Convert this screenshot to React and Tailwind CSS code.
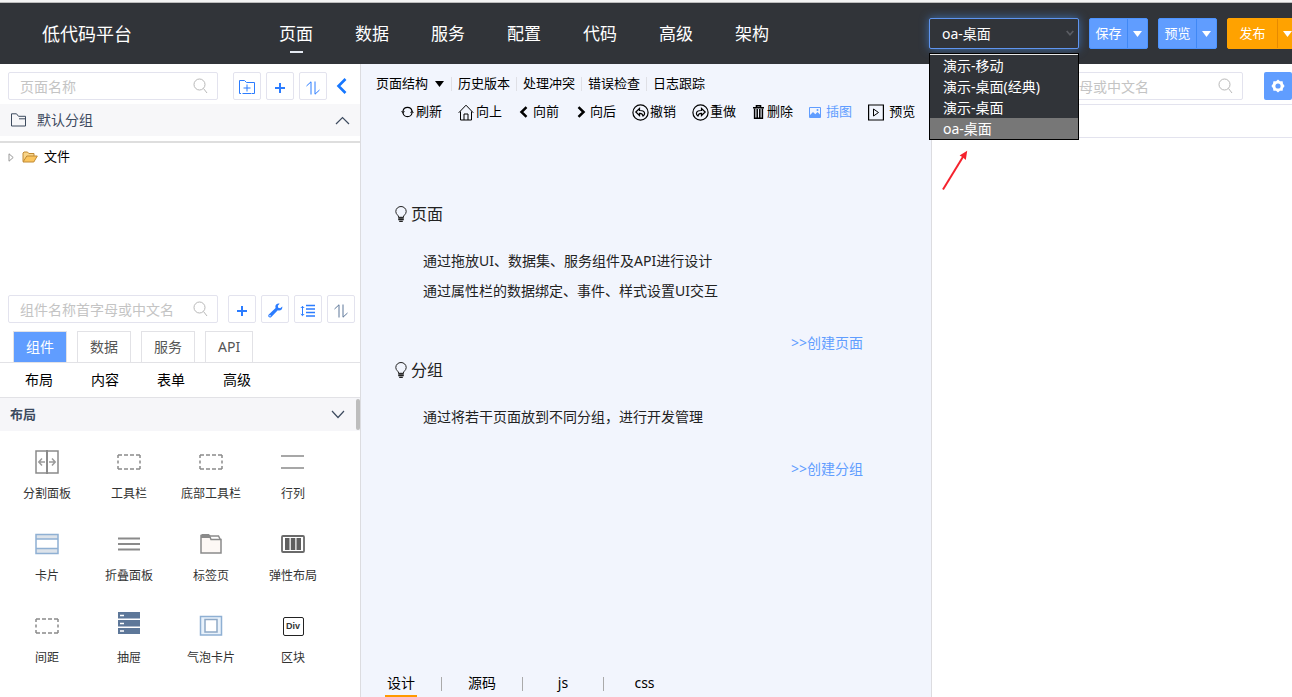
import React from "react";

const NAV = ["页面", "数据", "服务", "配置", "代码", "高级", "架构"];
const OPTIONS = ["演示-移动", "演示-桌面(经典)", "演示-桌面", "oa-桌面"];

function Svg({ w, h, children, className = "" }) {
  return (
    <svg
      width={w}
      height={h}
      viewBox={`0 0 ${w} ${h}`}
      fill="none"
      stroke="currentColor"
      aria-hidden="true"
      className={`shrink-0 ${className}`}
    >
      {children}
    </svg>
  );
}

const Caret = () => (
  <Svg w={9} h={6}>
    <path d="M0 0h9L4.5 6z" fill="currentColor" stroke="none" />
  </Svg>
);

const SearchIcon = () => (
  <Svg w={15} h={16} className="text-[#b8b8b8]">
    <circle cx="6.5" cy="6.5" r="5.5" />
    <path d="M10.5 10.5l3.5 4.5" />
  </Svg>
);

const PlusIcon = () => (
  <Svg w={12} h={12} className="mt-1">
    <path d="M6 1v10M1 6h10" strokeWidth="2" />
  </Svg>
);

const SortIcon = () => (
  <Svg w={14} h={14} className="mt-1">
    <path d="M.5 5L5 .8V13.5M9 .5v12.7L13.5 9" />
  </Svg>
);

const AddFolderIcon = () => (
  <Svg w={18} h={16} className="mt-0.5">
    <path d="M3 14.500H1.500v-13h5l2 2h8v11H14M4.500 14.500h9M9 5.500v7M5.500 9h7" />
  </Svg>
);

const WrenchIcon = () => (
  <Svg w={15} h={15} className="mt-0.5">
    <path
      d="M14.300 3.400L12.200 5.200 10.200 4.700 9.800 2.800 11.600.7C9.600.1 7.800 1.200 7.400 3c-.1.700 0 1.300.2 1.900L.8 11.500c-.7.700-.7 1.800 0 2.500s1.800.6 2.500-.1L9.800 7.300c2.700.9 5-1.200 4.500-3.900z"
      fill="currentColor"
      stroke="none"
    />
    <circle cx="2" cy="12.800" r=".7" fill="#fff" stroke="none" />
  </Svg>
);

const LineHeightIcon = () => (
  <Svg w={16} h={14} className="mt-1">
    <path d="M2.500 2.500v9M.8 4l1.700-1.700L4.200 4M.8 10l1.700 1.700L4.200 10" />
    <path d="M6 1.500h9M6 5h9M6 8.500h9M6 12h9" strokeWidth="1.300" />
  </Svg>
);

function IconButton({ label, children }) {
  return (
    <button
      type="button"
      aria-label={label}
      className="flex size-7 shrink-0 items-center justify-center rounded-xs border border-[#e3e3ee] bg-white text-[#2b7cff]"
    >
      {children}
    </button>
  );
}

function SearchBox({ label, className = "" }) {
  return (
    <label
      className={`flex h-7 shrink-0 items-center rounded-xs border border-[#e3e3ee] bg-white pr-[9px] pl-[11px] ${className}`}
    >
      <input
        type="text"
        aria-label={label}
        placeholder={label}
        className="h-full w-0 min-w-0 flex-1 bg-transparent text-sm outline-none placeholder:text-[#c4c4c4]"
      />
      <SearchIcon />
    </label>
  );
}

function SplitButton({ label, color, divider, width }) {
  return (
    <div className={`flex h-[31px] shrink-0 overflow-hidden rounded-xs border text-[13px] text-white ${color}`}>
      <button type="button" className={`${width} text-center`}>
        {label}
      </button>
      <button
        type="button"
        aria-label={`${label}选项`}
        className={`flex w-5 items-center justify-center border-l ${divider}`}
      >
        <Caret />
      </button>
    </div>
  );
}

function Header() {
  return (
    <header className="flex h-[61px] items-center bg-[#313439] text-white">
      <h1 className="w-[258px] shrink-0 pl-[42px] text-lg">低代码平台</h1>
      <nav className="flex h-full shrink-0">
        {NAV.map((item, i) => (
          <a
            key={item}
            href="#"
            className="relative flex w-[76px] items-center justify-center text-[17px]"
          >
            {item}
            {i === 0 && <span className="absolute bottom-[11px] h-0.5 w-[13px] bg-[#e4e9f2]" />}
          </a>
        ))}
      </nav>
      <div className="ml-auto flex w-[363px] shrink-0 gap-2.5">
        <div className="relative w-[150px] shrink-0">
          <select
            aria-label="应用"
            defaultValue="oa-桌面"
            className="block h-[31px] w-full appearance-none rounded-xs border border-[#5f95f0] bg-[#313439] pl-3 text-sm text-white shadow-[0_0_10px_#3f6fae] outline-none"
          >
            {OPTIONS.map((o) => (
              <option key={o}>{o}</option>
            ))}
          </select>
          <Svg w={8} h={6} className="pointer-events-none absolute top-3 right-[5px] text-[#5a5d63]">
            <path d="M.7 1L4 4.700 7.300 1" strokeWidth="1.700" />
          </Svg>
          <ul
            role="listbox"
            aria-label="应用列表"
            className="absolute top-[35px] left-0 z-20 w-full border border-black bg-[#313439] text-sm leading-[21px]"
          >
            <li role="presentation" className="h-px bg-[#e8e8e8]" />
            {OPTIONS.map((o) => (
              <li
                key={o}
                role="option"
                aria-selected={o === "oa-桌面"}
                className="pl-[13px] aria-selected:bg-[#777777]"
              >
                {o}
              </li>
            ))}
          </ul>
          <Svg w={28} h={42} className="pointer-events-none absolute top-[132px] left-3 z-20 text-[#f5222d]">
            <path d="M2 39.500L22.500 6" strokeWidth="2" />
            <path d="M26.200.8L18.600 5.500l3.200 1.800 3 2.800z" fill="currentColor" stroke="none" />
          </Svg>
        </div>
        <SplitButton label="保存" color="border-[#4b93ff] bg-[#609dff]" divider="border-[#4088f5]" width="w-[37px]" />
        <SplitButton label="预览" color="border-[#4b93ff] bg-[#609dff]" divider="border-[#4088f5]" width="w-[37px]" />
        <SplitButton label="发布" color="border-[#ffa200] bg-[#ffa200]" divider="border-[#e68a00]" width="w-[49px]" />
      </div>
    </header>
  );
}

const GRAY = "#8a8a8a";

const DashedIcon = () => (
  <Svg w={24} h={16}>
    <path d="M1 1h22M1 15h22" stroke={GRAY} strokeWidth="1.500" strokeDasharray="4 2" />
    <path d="M1 1v14M23 1v14" stroke={GRAY} strokeWidth="1.500" strokeDasharray="3 2.500" />
  </Svg>
);

const COMPONENTS = [
  [
    "分割面板",
    <Svg w={24} h={24}>
      <path d="M1 1h22v22H1z" stroke={GRAY} strokeWidth="1.500" />
      <path d="M12 0v24" stroke={GRAY} strokeWidth="2" />
      <path d="M4 12h6M7 8.500L3.800 12 7 15.500M14 12h6M17 8.500l3.200 3.500-3.200 3.500" stroke="#9a9a9a" strokeWidth="1.500" />
    </Svg>,
  ],
  ["工具栏", <DashedIcon />],
  ["底部工具栏", <DashedIcon />],
  [
    "行列",
    <Svg w={24} h={16}>
      <path d="M0 2h23M0 14h23" stroke={GRAY} strokeWidth="1.500" />
    </Svg>,
  ],
  [
    "卡片",
    <Svg w={24} h={22}>
      <path d="M1 2h22v18H1z" fill="#fff" stroke="none" />
      <path d="M1 2h22v4H1zM1 16h22v4H1z" fill="#dde3ea" stroke="none" />
      <path d="M1 1.500h22v19H1zM1 6h22M1 15.500h22" stroke="#8fb0d3" strokeWidth="1.500" />
    </Svg>,
  ],
  [
    "折叠面板",
    <Svg w={22} h={16}>
      <path d="M0 2.500h22M0 8h22M0 13.500h22" stroke={GRAY} strokeWidth="2" />
    </Svg>,
  ],
  [
    "标签页",
    <Svg w={22} h={20}>
      <path d="M1 1.500h8.500l1.500 4h10V19H1z" fill="#fdf8f5" stroke={GRAY} strokeWidth="1.500" />
      <path d="M2 0h7l1.500 4H1V1z" fill={GRAY} stroke="none" />
      <path d="M9.500 2h9l1.800 3.500" stroke={GRAY} strokeWidth="1.500" />
    </Svg>,
  ],
  [
    "弹性布局",
    <Svg w={24} h={18}>
      <rect x="1" y="1" width="22" height="16" rx="1" stroke="#6a6a6a" strokeWidth="1.800" />
      <path d="M4 3h4.500v12H4zM9.800 3h4.500v12H9.800zM15.500 3H20v12h-4.500z" fill="#5f5f5f" stroke="none" />
    </Svg>,
  ],
  ["间距", <DashedIcon />],
  [
    "抽屉",
    <Svg w={22} h={22} className="mb-1.5">
      <path d="M0 0h22v6.500H0zM0 8h22v6.500H0zM0 16h22v6H0z" fill="#5d7799" stroke="none" />
      <path d="M2 3.500h4M2 11.500h4M2 19h4" stroke="#fff" strokeWidth="1.400" />
    </Svg>,
  ],
  [
    "气泡卡片",
    <Svg w={24} h={22}>
      <path d="M1.500 1.500h21v18.500h-21z" fill="#e9f2fb" stroke="#8fb0d3" strokeWidth="1.500" />
      <path d="M6 4.500h12v12.500H6z" fill="#fff" stroke="#8fa9c6" strokeWidth="1.500" />
    </Svg>,
  ],
  [
    "区块",
    <span className="flex h-[19px] w-[21px] items-center justify-center rounded-xs border border-[#222] font-['Liberation_Sans',sans-serif] text-[9px] leading-none font-bold text-[#333]">
      Div
    </span>,
  ],
];

function LeftPanel() {
  return (
    <aside className="relative flex w-[361px] shrink-0 flex-col border-r border-[#dcdce0] bg-white">
      <div className="flex items-center pt-2 pb-1 pl-2">
        <SearchBox label="页面名称" className="w-[210px]" />
        <div className="ml-[15px] flex gap-[5px]">
          <IconButton label="新建分组">
            <AddFolderIcon />
          </IconButton>
          <IconButton label="新建页面">
            <PlusIcon />
          </IconButton>
          <IconButton label="排序">
            <SortIcon />
          </IconButton>
        </div>
        <button type="button" aria-label="收起" className="ml-[9px] text-[#1677ff]">
          <Svg w={11} h={16}>
            <path d="M9.500 1L2.500 8l7 7" strokeWidth="2.600" />
          </Svg>
        </button>
      </div>

      <button
        type="button"
        className="flex h-8 items-center bg-[#f7f7f9] pr-2.5 pl-2.5 text-sm text-[#3d4b5f]"
      >
        <Svg w={17} h={14}>
          <path d="M1.500 13V.8h5l2 2.500H15.500V13zM9 5.800h6.500" />
        </Svg>
        <span className="ml-2.5">默认分组</span>
        <Svg w={15} h={9} className="ml-auto">
          <path d="M1 8l6.500-6.500L14 8" strokeWidth="1.200" />
        </Svg>
      </button>

      <div className="mt-[5px] h-[154px] border-t-2 border-[#dedede]">
        <div className="flex h-7 items-center pl-2 text-[13px] text-black">
          <Svg w={6} h={9} className="text-[#999]">
            <path d="M1 .8v7.400l4.200-3.700z" />
          </Svg>
          <Svg w={16} h={12} className="ml-2">
            <path d="M1 10.500V2l1-1h3.500l1.300 1.500H12v2.500" fill="#f8d58a" stroke="#c08a35" />
            <path d="M1 11l3.800-6h10.500L11.800 11z" fill="#fbc55e" stroke="#c08a35" />
          </Svg>
          <span className="ml-1.5">文件</span>
        </div>
      </div>

      <div className="flex items-center pl-2">
        <SearchBox label="组件名称首字母或中文名" className="w-[210px]" />
        <div className="ml-2.5 flex gap-[5px]">
          <IconButton label="新建组件">
            <PlusIcon />
          </IconButton>
          <IconButton label="设置组件">
            <WrenchIcon />
          </IconButton>
          <IconButton label="行高">
            <LineHeightIcon />
          </IconButton>
          <IconButton label="组件排序">
            <span className="text-[#5d7799]">
              <SortIcon />
            </span>
          </IconButton>
        </div>
      </div>

      <div role="tablist" className="mt-2 flex h-8 gap-2.5 border-b border-[#e2e2e6] pl-[13px] text-sm text-[#555]">
        {["组件", "数据", "服务", "API"].map((t, i) => (
          <button
            key={t}
            type="button"
            role="tab"
            aria-selected={i === 0}
            className="h-8 border border-[#e2e2e6] px-3 aria-selected:bg-[#609dff] aria-selected:text-white"
          >
            {t}
          </button>
        ))}
      </div>

      <div className="flex h-[35px] border-b border-[#e2e2e6] pl-1.5 text-sm text-black">
        {["布局", "内容", "表单", "高级"].map((t) => (
          <button key={t} type="button" className="w-[66px]">
            {t}
          </button>
        ))}
      </div>

      <div className="relative">
        <button
          type="button"
          className="flex h-[33px] w-full items-center bg-[#f6f6f9] pr-[15px] pl-2.5 text-[13px] font-bold text-[#3d4b5f]"
        >
          布局
          <Svg w={14} h={9} className="ml-auto">
            <path d="M1 1l6 6.500L13 1" strokeWidth="1.200" />
          </Svg>
        </button>
        <span className="absolute top-px right-0 h-[31px] w-1 rounded-full bg-[#bdbdbd]" />
      </div>

      <div className="grid grid-cols-[repeat(4,82px)] pl-1.5">
        {COMPONENTS.map(([name, icon]) => (
          <button
            key={name}
            type="button"
            className="flex h-[82px] flex-col items-center pt-[15px] text-xs text-[#333]"
          >
            <span className="flex h-8 items-center">{icon}</span>
            <span className="mt-[7px] leading-[18px]">{name}</span>
          </button>
        ))}
      </div>
    </aside>
  );
}

const TOOLS = [
  [
    "刷新",
    "w-[15px]",
    <Svg w={13} h={12}>
      <path d="M2 5a4.600 4.600 0 0 1 9 0M2 7a4.600 4.600 0 0 0 9 0" strokeWidth="1.200" />
      <path d="M0 5.200h4L2 7.500zM9 6.800h4L11 4.500z" fill="currentColor" stroke="none" />
    </Svg>,
  ],
  [
    "向上",
    "w-[18px]",
    <Svg w={16} h={17}>
      <path d="M.7 8.800L8 1.200l7.300 7.600M2.500 7.500v8.500h11V7.500M6 16v-6h4v6" />
    </Svg>,
  ],
  [
    "向前",
    "w-[15px] pl-px",
    <Svg w={9} h={12}>
      <path d="M7.500 1.200L2.500 6l5 4.800" strokeWidth="2.500" />
    </Svg>,
  ],
  [
    "向后",
    "w-[15px] pl-0.5",
    <Svg w={9} h={12}>
      <path d="M1.500 1.200L6.500 6l-5 4.800" strokeWidth="2.500" />
    </Svg>,
  ],
  [
    "撤销",
    "w-[18px]",
    <Svg w={17} h={17}>
      <circle cx="8.500" cy="8.500" r="7.600" strokeWidth="1.200" />
      <path d="M7.500 4.500L3.800 8l3.700 3.500V9.300c2-.2 3 .5 3.600 2.700 1-.6 1.600-1.500 1.500-2.700-.3-2-2.300-2.900-5.100-2.800z" strokeWidth="1.200" />
    </Svg>,
  ],
  [
    "重做",
    "w-[18px]",
    <Svg w={17} h={17}>
      <circle cx="8.500" cy="8.500" r="7.600" strokeWidth="1.200" />
      <path d="M9.500 4.500L13.200 8l-3.700 3.500V9.300c-2-.2-3 .5-3.600 2.700-1-.6-1.600-1.500-1.500-2.700.3-2 2.300-2.900 5.100-2.800z" strokeWidth="1.200" />
    </Svg>,
  ],
  [
    "删除",
    "w-[15px] pl-px",
    <Svg w={11} h={14}>
      <path d="M0 2.800h11M3.500 2.500V.8h4v1.700" strokeWidth="1.600" />
      <path d="M1.600 3.500v9.700h7.800V3.500M4.200 4v9M6.800 4v9" strokeWidth="1.500" />
    </Svg>,
  ],
  [
    "插图",
    "w-[17px]",
    <Svg w={12} h={11}>
      <path d="M.5.5h11v10H.5z" />
      <path d="M1 10V8l3-3 2.300 2.200L8.500 5 11 7.500V10z" fill="currentColor" stroke="none" />
      <circle cx="8.500" cy="3" r="1" fill="currentColor" stroke="none" />
    </Svg>,
  ],
  [
    "预览",
    "w-[21px]",
    <Svg w={16} h={17}>
      <path d="M.6 1h14.800v15H.6z" strokeWidth="1.200" />
      <path d="M5.500 5v7l5-3.500z" />
    </Svg>,
  ],
];

function Tip({ title, lines, link }) {
  return (
    <section className="text-sm text-[#222]">
      <h2 className="flex h-6 items-center text-base">
        <Svg w={12} h={16} className="mr-1">
          <path d="M3.700 11.300C3.700 9 .8 8.600.8 5.500a5.200 5 0 0 1 10.400 0c0 3.100-2.900 3.500-2.900 5.800z" />
          <path d="M3.200 12h5.600M3.200 13.600h5.600M4.200 15.300h3.600" strokeWidth="1.300" />
        </Svg>
        {title}
      </h2>
      <div className="mt-5 pl-7 leading-[30px]">
        {lines.map((l) => (
          <p key={l}>{l}</p>
        ))}
      </div>
      <p className="mt-[22px] text-right leading-[30px]">
        <a href="#" className="text-[#609dff]">
          &gt;&gt;{link}
        </a>
      </p>
    </section>
  );
}

function Canvas() {
  return (
    <main className="flex min-w-0 flex-1 flex-col bg-[#f2f5fd] text-black">
      <div className="mt-2.5 flex h-5 items-center pl-[15px] text-[13px] whitespace-nowrap">
        <button type="button" className="flex items-center gap-[7px] pr-[7px]">
          页面结构
          <Caret />
        </button>
        {["历史版本", "处理冲突", "错误检查", "日志跟踪"].map((t) => (
          <button key={t} type="button" className="flex items-center pr-1.5">
            <span className="mr-1.5 h-3.5 w-px bg-[#dfe0e6]" />
            {t}
          </button>
        ))}
      </div>
      <div className="mt-2 flex h-5 items-center gap-4 pl-10 text-[13px] whitespace-nowrap">
        {TOOLS.map(([name, box, icon]) => (
          <button
            key={name}
            type="button"
            className={`flex items-center ${name === "插图" ? "text-[#609dff]" : ""}`}
          >
            <span className={`shrink-0 ${box}`}>{icon}</span>
            {name}
          </button>
        ))}
      </div>

      <div className="mt-20 pr-[68px] pl-[34px]">
        <Tip
          title="页面"
          lines={["通过拖放UI、数据集、服务组件及API进行设计", "通过属性栏的数据绑定、事件、样式设置UI交互"]}
          link="创建页面"
        />
        <Tip title="分组" lines={["通过将若干页面放到不同分组，进行开发管理"]} link="创建分组" />
      </div>

      <div role="tablist" className="mt-auto flex h-[26px] text-sm">
        {["设计", "源码", "js", "css"].map((t, i) => (
          <div key={t} className="flex w-[81px] items-center">
            <div className="flex flex-1 justify-center">
              <button
                type="button"
                role="tab"
                aria-selected={i === 0}
                className="h-[26px] border-b-2 border-transparent px-0.5 aria-selected:border-[#ff9900]"
              >
                {t}
              </button>
            </div>
            {i < 3 && <span className="h-3.5 w-px bg-[#aaa]" />}
          </div>
        ))}
      </div>
    </main>
  );
}

function RightPanel() {
  return (
    <aside className="w-[361px] shrink-0 border-l border-[#dcdce0] bg-white">
      <div className="flex h-[41px] justify-end gap-[21px] border-b border-[#e3e3ee] pt-2">
        <SearchBox label="属性名称首字母或中文名" className="w-[260px]" />
        <button
          type="button"
          aria-label="设置"
          className="flex size-7 items-center justify-center rounded-xs bg-[#609dff] text-white"
        >
          <Svg w={14} h={14}>
            <path
              d="M7 .6L9 2.300l2.600-.1L12 4.800 13.600 7 12 9.200l-.4 2.600-2.600-.1L7 13.400 5 11.700l-2.600.1L2 9.200.4 7 2 4.800l.4-2.600 2.600.1z"
              fill="currentColor"
              stroke="none"
            />
            <circle cx="7" cy="7" r="2.600" fill="#609dff" stroke="none" />
          </Svg>
        </button>
      </div>
      <div className="h-[33px] border-b border-[#e3e3ee]" />
    </aside>
  );
}

export default function App() {
  return (
    <div className="flex min-h-screen flex-col overflow-hidden bg-white font-['Noto_Sans','Noto_Sans_CJK_SC',sans-serif]">
      <div className="h-[3px] border-b border-[#bdbdbd] bg-[#f3f3f3]" />
      <Header />
      <div className="flex flex-1">
        <LeftPanel />
        <Canvas />
        <RightPanel />
      </div>
    </div>
  );
}
